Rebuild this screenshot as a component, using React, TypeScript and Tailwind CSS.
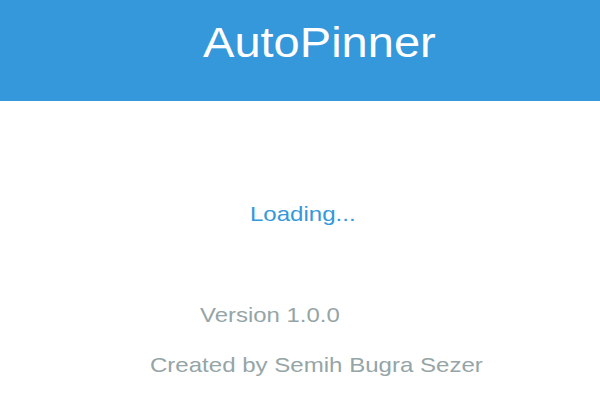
export default function App() {
  return (
    <div className="h-[400px] w-[600px] overflow-hidden bg-white font-['Liberation_Sans',Arial,sans-serif]">
      <header className="h-[101px] bg-[#3498db] pt-[22px]">
        <h1 className="ml-[203px] origin-left scale-x-[1.12] text-[42px] leading-none text-white">AutoPinner</h1>
      </header>

      <p className="ml-[250px] mt-[102px] origin-left scale-x-[1.145] text-[21px] leading-none text-[#3498db]">
        Loading...
      </p>

      <p className="ml-[200px] mt-[80px] origin-left scale-x-[1.14] text-[21px] leading-none text-[#95a5a6]">
        Version 1.0.0
      </p>
      <p className="ml-[150px] mt-[29px] origin-left scale-x-[1.145] text-[21px] leading-none text-[#95a5a6]">
        Created by Semih Bugra Sezer
      </p>
    </div>
  );
}
